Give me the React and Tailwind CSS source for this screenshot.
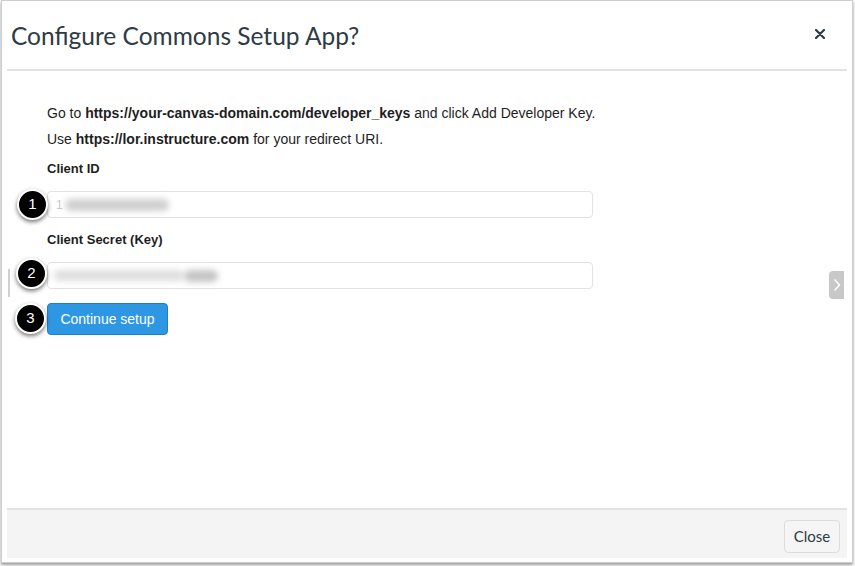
import React from "react";

function Badge({ n, className }) {
  return (
    <div
      className={
        "absolute w-[31px] h-[31px] rounded-full bg-black border-2 border-white flex items-center justify-center text-white text-[15px] shadow-[0_2px_4px_rgba(0,0,0,0.55)] " +
        className
      }
      style={{ fontFamily: '"Liberation Sans", Arial, sans-serif' }}
    >
      {n}
    </div>
  );
}

export default function App() {
  return (
    <div className="w-[855px] h-[566px] bg-white relative overflow-hidden">
      <div className="ml-px w-[852px] h-[563px] border border-[#cdcdcd] shadow-[0_2px_3px_rgba(0,0,0,0.4)] bg-white flex flex-col relative">
        {/* header */}
        <div className="mx-[5px] h-[70px] border-b-2 border-[#dfe3e6] flex items-center justify-between pl-[4px] pr-[22px] shrink-0">
          <h1
            className="text-[24.5px] text-[#2d3b45] leading-none mt-[2px]"
            style={{ fontFamily: 'Lato, "Open Sans", sans-serif' }}
          >
            Configure Commons Setup App?
          </h1>
          <svg width="10" height="10" viewBox="0 0 10 10" className="mt-[-3px]">
            <path d="M1 1 L9 9 M9 1 L1 9" stroke="#2d3b45" strokeWidth="2.2" strokeLinecap="round" />
          </svg>
        </div>

        {/* body */}
        <div
          className="flex-1 pl-[45px] pt-[29px] text-[14px] text-[#1e1e1e] relative"
          style={{ fontFamily: '"Liberation Sans", Arial, sans-serif' }}
        >
          <p className="leading-[26px]">
            Go to <b>https://your-canvas-domain.com/developer_keys</b> and click Add Developer Key.
          </p>
          <p className="leading-[26px]">
            Use <b>https://lor.instructure.com</b> for your redirect URI.
          </p>

          <div className="mt-[7px] leading-[20px] text-[13px] font-bold">Client ID</div>
          <div className="relative mt-[12px] w-[546px] h-[27px] rounded-[4px] border border-[#e2e2e2] flex items-center pl-[8px]">
            <Badge n="1" className="left-[-31px] top-[-3px]" />
            <span className="text-[#c8c8c8] text-[12px]">1</span>
            <div className="ml-[2px] w-[104px] h-[12px] rounded-full bg-[#cfcfcf] blur-[3px]" />
          </div>

          <div className="mt-[12px] leading-[20px] text-[13px] font-bold">Client Secret (Key)</div>
          <div className="relative mt-[12px] w-[546px] h-[27px] rounded-[4px] border border-[#e2e2e2] flex items-center pl-[6px]">
            <Badge n="2" className="left-[-32px] top-[-5px]" />
            <div className="w-[130px] h-[11px] rounded-full bg-[#dedede] blur-[3px]" />
            <div className="w-[34px] h-[12px] rounded-full bg-[#c4c4c4] blur-[3px]" />
          </div>

          <div className="relative mt-[14px]">
            <Badge n="3" className="left-[-32px] top-[0px]" />
            <button className="w-[121px] h-[32px] rounded-[4px] bg-[#2d97e4] border border-[#1d7fc9] text-white text-[14px]">
              Continue setup
            </button>
          </div>

          <div className="absolute left-[6px] top-[198px] w-[2px] h-[28px] bg-[#cfcfcf]" />
          <div className="absolute right-[8px] top-[200px] w-[15px] h-[28px] rounded-l-[4px] bg-[#c8c8c8] flex items-center justify-center">
            <svg width="8" height="14" viewBox="0 0 8 14">
              <path d="M1.5 1.5 L6.5 7 L1.5 12.5" stroke="white" strokeWidth="1.5" fill="none" />
            </svg>
          </div>
        </div>

        {/* footer */}
        <div className="mx-[5px] mb-[4px] h-[50px] bg-[#f4f4f4] border-t-2 border-[#dfe3e6] flex items-center justify-end pr-[7px] shrink-0">
          <button
            className="w-[56px] h-[33px] mt-[4px] rounded-[4px] border border-[#dcdcdc] bg-[#f5f5f5] text-[#2d3b45] text-[15px]"
            style={{ fontFamily: 'Lato, "Open Sans", sans-serif' }}
          >
            Close
          </button>
        </div>
      </div>
    </div>
  );
}
